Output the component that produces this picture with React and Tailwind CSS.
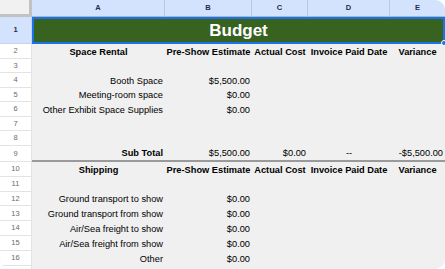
import React from "react";

const cols = [
  { key: "A", w: "w-[133px]" },
  { key: "B", w: "w-[87px]" },
  { key: "C", w: "w-[56px]" },
  { key: "D", w: "w-[82px]" },
  { key: "E", w: "w-[55px]" },
];

// each row: [A, B, C, D, E] and a style flag
const rows = [
  { n: 2, head: true, cells: ["Space Rental", "Pre-Show Estimate", "Actual Cost", "Invoice Paid Date", "Variance"] },
  { n: 3, cells: [] },
  { n: 4, cells: ["Booth Space", "$5,500.00"] },
  { n: 5, cells: ["Meeting-room space", "$0.00"] },
  { n: 6, cells: ["Other Exhibit Space Supplies", "$0.00"] },
  { n: 7, cells: [] },
  { n: 8, cells: [] },
  { n: 9, total: true, cells: ["Sub Total", "$5,500.00", "$0.00", "--", "-$5,500.00"] },
  { n: 10, low: true, head: true, cells: ["Shipping", "Pre-Show Estimate", "Actual Cost", "Invoice Paid Date", "Variance"] },
  { n: 11, low: true, cells: [] },
  { n: 12, low: true, cells: ["Ground transport to show", "$0.00"] },
  { n: 13, low: true, cells: ["Ground transport from show", "$0.00"] },
  { n: 14, low: true, cells: ["Air/Sea freight to show", "$0.00"] },
  { n: 15, low: true, cells: ["Air/Sea freight from show", "$0.00"] },
  { n: 16, low: true, cells: ["Other", "$0.00"] },
  { n: 17, low: true, cells: [] },
];

function Cell({ row, i, text }) {
  let align = "justify-end pr-[2px]";
  if (row.head) align = "justify-center";
  if (row.total && i === 3) align = "justify-center";
  const bold = row.head || (row.total && i === 0) ? "font-bold" : "";
  return (
    <div className={`${cols[i].w} flex items-end pb-[1px] leading-[11px] ${align} ${bold} whitespace-nowrap overflow-visible`}>
      {text}
    </div>
  );
}

function Row({ row }) {
  const h = row.total ? "h-[16.5px]" : row.low ? "h-[14.8px]" : "h-[14.5px]";
  return (
    <div className={`flex shrink-0 ${h}`}>
      <div className="w-[32px] shrink-0 bg-white border-b border-r border-[#e3e3e3] flex items-center justify-center text-[7.5px] text-[#6b6b6b]">
        {row.n < 17 ? row.n : ""}
      </div>
      <div className={`flex flex-1 text-[9.25px] text-black ${row.total ? "border-b-2 border-[#9a9a9a]" : ""}`}>
        {cols.map((c, i) => (
          <Cell key={c.key} row={row} i={i} text={row.cells[i] || ""} />
        ))}
      </div>
    </div>
  );
}

export default function App() {
  return (
    <div
      className="w-[445px] h-[269px] overflow-hidden bg-[#f0f0f0] rounded-tr-[10px] rounded-br-[10px] rounded-bl-[10px] flex flex-col"
      style={{ fontFamily: '"Liberation Sans", Arial, sans-serif' }}
    >
      {/* column headers */}
      <div className="flex h-[17px] shrink-0">
        <div className="w-[32px] shrink-0 bg-[#f1f1f1] border-r-[3px] border-b-[3px] border-[#c2c2c2]" />
        {cols.map((c, i) => (
          <div
            key={c.key}
            className={`${c.w} flex items-center justify-center bg-[#d3e3fd] border-b border-[#a9b6cc] ${i < 4 ? "border-r border-r-[#bcc8dc]" : ""} text-[7.5px] font-bold text-[#1f2d4a]`}
          >
            {c.key}
          </div>
        ))}
      </div>

      {/* title row */}
      <div className="flex h-[27px] shrink-0">
        <div className="w-[32px] shrink-0 bg-[#d3e3fd] border-r border-b border-[#c7d3e8] flex items-center justify-center text-[7.5px] font-bold text-[#1f2d4a]">
          1
        </div>
        <div className="relative flex-1 bg-[#38621f] border-2 border-[#1a73e8] flex items-center justify-center text-white font-bold text-[17px]">
          Budget
          <div className="absolute right-[-4px] bottom-[-4px] w-[6px] h-[6px] rounded-full bg-[#1a73e8] border border-white" />
        </div>
      </div>

      {rows.map((r) => (
        <Row key={r.n} row={r} />
      ))}
    </div>
  );
}
